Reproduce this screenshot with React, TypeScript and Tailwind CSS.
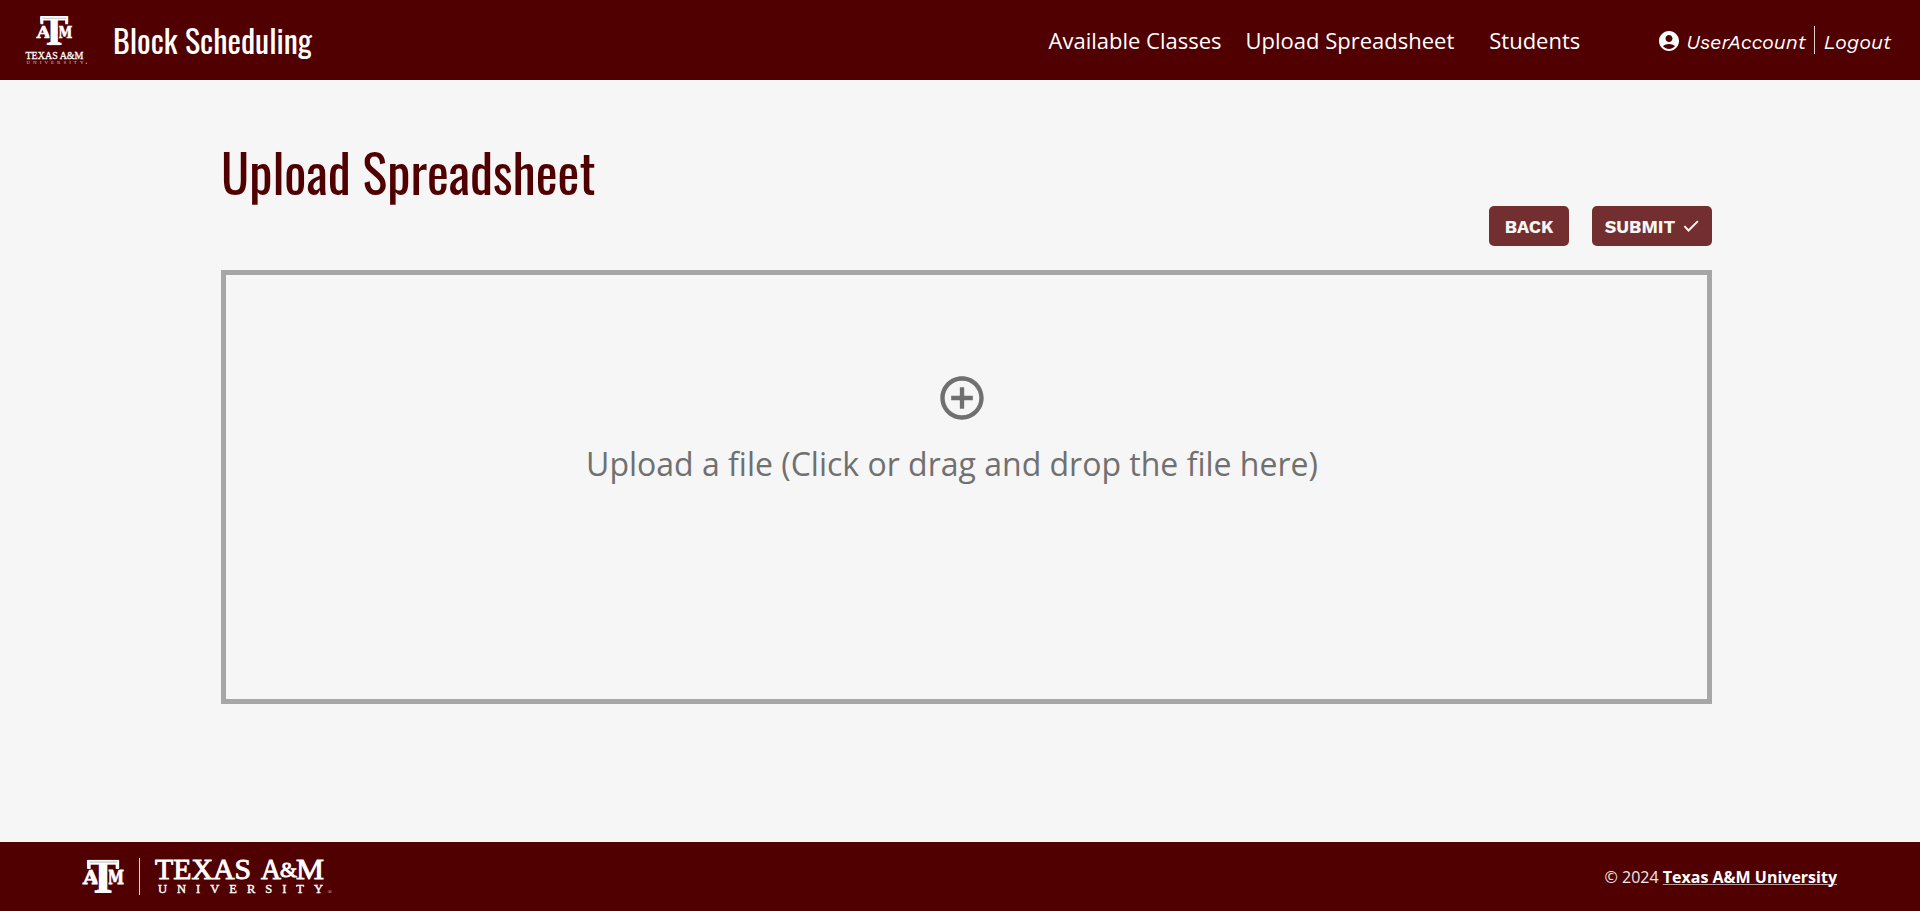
import { MdAccountCircle, MdAddCircleOutline } from "react-icons/md";

function Monogram() {
  return (
    <g fontFamily="'DejaVu Serif', serif" fontWeight="700" fill="#fff">
      <g stroke="#fff" strokeWidth=".8">
        <text x="0.4" y="25.2" fontSize="18.5" textLength="15.8" lengthAdjust="spacingAndGlyphs">A</text>
        <text x="25.2" y="25.2" fontSize="18.5" textLength="16.2" lengthAdjust="spacingAndGlyphs">M</text>
      </g>
      <text x="4.3" y="33.2" fontSize="44" textLength="32.6" lengthAdjust="spacingAndGlyphs" stroke="#500000" strokeWidth="2.4" paintOrder="stroke">T</text>
      <path d="M5 3H36.3" stroke="#fff" strokeWidth="4.8" />
      <path d="M6.4 1V9.6M34.9 1V9.6" stroke="#fff" strokeWidth="3.2" />
      <path d="M14.5 32H27" stroke="#fff" strokeWidth="3.4" />
      <path d="M7 2.8H34.5" stroke="#c3b8b8" strokeWidth="1" />
    </g>
  );
}

function StackedLogo() {
  return (
    <svg width="64" height="52" viewBox="0 0 64 52" className="block overflow-visible" fill="#fff" fontFamily="'Liberation Serif', serif">
      <g transform="translate(11.3 1.8) scale(.87)">
        <Monogram />
      </g>
      <text x="0.5" y="44.8" fontSize="11" textLength="58" lengthAdjust="spacingAndGlyphs" stroke="#fff" strokeWidth=".3">TEXAS A&amp;M</text>
      <text x="1.5" y="50" fontSize="5" textLength="57" fill="#d8caca">UNIVERSITY</text>
      <circle cx="61.3" cy="49.3" r=".7" fill="#c0a8a8" />
    </svg>
  );
}

function WideLogo() {
  return (
    <svg width="252" height="40" viewBox="0 0 252 40" className="block overflow-visible" fill="#fff" fontFamily="'Liberation Serif', serif">
      <g transform="translate(0.5 2.3)">
        <Monogram />
      </g>
      <path d="M57.5 1V38" stroke="#e5dada" strokeWidth="1" />
      <g stroke="#fff" strokeWidth=".9">
        <text x="73" y="21.8" fontSize="29" textLength="96" lengthAdjust="spacingAndGlyphs">TEXAS</text>
        <text x="179" y="21.8" fontSize="29" textLength="20" lengthAdjust="spacingAndGlyphs">A</text>
        <text x="198" y="20.3" fontSize="22" textLength="17" lengthAdjust="spacingAndGlyphs">&amp;</text>
        <text x="214" y="21.8" fontSize="29" textLength="28" lengthAdjust="spacingAndGlyphs">M</text>
      </g>
      <text x="76" y="36.2" fontSize="12.5" letterSpacing="10" stroke="#fff" strokeWidth=".4">UNIVERSITY</text>
      <text x="245.5" y="36.8" fontSize="6" fill="#d8caca">®</text>
    </svg>
  );
}

function CheckIcon() {
  return (
    <svg width="20" height="20" viewBox="0 0 24 24" className="block" fill="none" stroke="currentColor" strokeWidth="2.3">
      <path d="M4.1 12.2L9 17.4L20.3 6.1" />
    </svg>
  );
}

export default function App() {
  return (
    <div className="flex h-[911px] flex-col bg-[#f6f6f6] font-['Open_Sans','Noto_Sans',sans-serif]">
      <header className="flex h-20 shrink-0 items-center bg-[#500000] pl-[25px] pr-[29px] text-white">
        <StackedLogo />
        <h1 className="ml-6 font-['Oswald','Roboto_Condensed',sans-serif] text-[32px] leading-none">Block Scheduling</h1>
        <nav className="ml-auto flex items-center text-[22px]">
          <a className="mr-6">Available Classes</a>
          <a className="mr-[35px]">Upload Spreadsheet</a>
          <a>Students</a>
        </nav>
        <div className="ml-[77px] flex items-center font-['Work_Sans','Inter',sans-serif] text-[20px] italic">
          <MdAccountCircle size={24} className="mt-0.5" />
          <a className="ml-[5px] mt-1">UserAccount</a>
          <div className="ml-2 mr-[9px] h-7 w-px bg-[#dccfcf]" />
          <a className="mt-1">Logout</a>
        </div>
      </header>
      <main className="flex-1 pl-[221px] pr-[208px]">
        <h2 className="mt-[52px] h-[74px] font-['Oswald','Roboto_Condensed',sans-serif] text-[52px] leading-[80px] text-[#500000]">Upload Spreadsheet</h2>
        <div className="flex h-10 justify-end gap-[23px] font-['Work_Sans','Inter',sans-serif] text-[18px] font-bold text-[#f6f6f6]">
          <button className="h-10 w-20 rounded-[5px] bg-[#732f2f]">BACK</button>
          <button className="flex h-10 w-[120px] items-center justify-center gap-1.5 rounded-[5px] bg-[#732f2f] pl-0.5">
            SUBMIT
            <CheckIcon />
          </button>
        </div>
        <div className="mt-6 flex h-[434px] flex-col items-center border-[5px] border-[#a6a6a6] text-[#707070]">
          <MdAddCircleOutline size={52} className="mr-[9px] mt-[97px]" />
          <p className="mr-[29px] mt-[18px] text-[32px] leading-[44px]">Upload a file (Click or drag and drop the file here)</p>
        </div>
      </main>
      <footer className="flex h-[69px] shrink-0 items-center justify-between bg-[#500000] pl-[82px] pr-[83px] text-[16px] text-white">
        <WideLogo />
        <p className="text-[#f0eaea]">
          © 2024 <a className="font-bold text-white underline decoration-[#b99] decoration-1">Texas A&amp;M University</a>
        </p>
      </footer>
    </div>
  );
}
